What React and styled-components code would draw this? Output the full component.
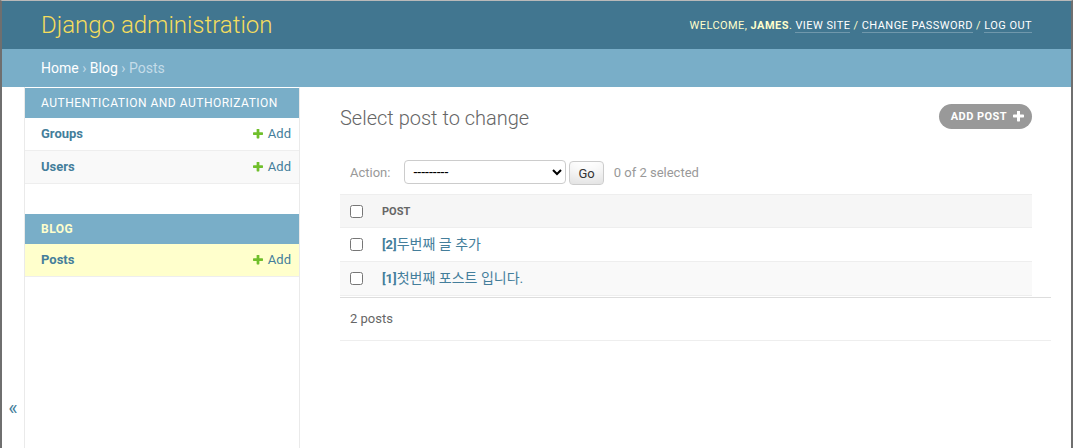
import React from 'react'
import styled, { createGlobalStyle } from 'styled-components'

const GlobalStyle = createGlobalStyle`
  html {
    box-sizing: border-box;
  }
  *, *::before, *::after {
    box-sizing: inherit;
  }
  body {
    margin: 0;
    font-family: Roboto, 'Noto Sans CJK KR', 'Liberation Sans', sans-serif;
    font-size: 14px;
    color: #333;
    background: #fff;
  }
`

const Frame = styled.div`
  min-height: 100vh;
  display: flex;
  flex-direction: column;
  border-top: 1px solid #b9b9b9;
  border-left: 2px solid #6f6f6f;
  border-right: 2px solid #6f6f6f;
`

const Header = styled.header`
  display: flex;
  justify-content: space-between;
  align-items: center;
  height: 48px;
  padding: 10px 39px 10px 39px;
  background: #417690;
  color: #ffc;
`

const Branding = styled.h1`
  margin: 0;
  font-size: 24px;
  font-weight: 300;
  line-height: 28px;
  color: #f5dd5d;
`

const UserTools = styled.div`
  font-size: 11px;
  letter-spacing: 0.45px;
  text-transform: uppercase;
  color: #ffc;
  padding-top: 1px;

  strong {
    font-weight: 700;
  }
`

const ToolLink = styled.a`
  color: #fff;
  text-decoration: none;
  border-bottom: 1px solid rgba(255, 255, 255, 0.25);
`

const Breadcrumbs = styled.nav`
  padding: 10px 39px;
  background: #79aec8;
  color: #c4dce8;
  font-size: 14px;
  line-height: 18px;

  a {
    color: #fff;
    text-decoration: none;
  }
`

const Main = styled.div`
  flex: 1;
  display: flex;
`

const Toggle = styled.button`
  flex: 0 0 23px;
  display: flex;
  align-items: flex-end;
  justify-content: center;
  padding: 0 0 28px;
  border: 0;
  border-right: 1px solid #eaeaea;
  background: #fff;
  color: #447e9b;
  font-family: Roboto, sans-serif;
  font-size: 20px;
  line-height: 23px;
`

const Sidebar = styled.nav`
  flex: 0 0 275px;
  border-top: 1px solid transparent;
  border-right: 1px solid #eaeaea;
`

const Module = styled.div`
  margin-bottom: 30px;
`

const Caption = styled.div`
  padding: 8px 16px;
  background: #79aec8;
  color: ${p => (p.current ? '#ffc' : '#fff')};
  font-size: 12px;
  font-weight: ${p => (p.current ? 700 : 400)};
  line-height: 14px;
  letter-spacing: 0.5px;
  text-transform: uppercase;
`

const NavRow = styled.div`
  display: flex;
  justify-content: space-between;
  padding: 8px 8px 8px 16px;
  font-size: 13px;
  line-height: 16px;
  border-bottom: 1px solid #eee;
  background: ${p => (p.current ? '#ffc' : p.alt ? '#f9f9f9' : '#fff')};
`

const ModelLink = styled.a`
  color: #447e9b;
  font-weight: 700;
  text-decoration: none;
`

const AddLink = styled.a`
  display: flex;
  align-items: center;
  gap: 5px;
  color: #447e9b;
  text-decoration: none;
`

const Content = styled.div`
  flex: 1;
  padding: 20px 39px 20px 40px;
`

const TitleRow = styled.div`
  display: flex;
  justify-content: space-between;
  align-items: flex-start;
`

const Title = styled.h1`
  margin: 0 0 20px;
  font-size: 20px;
  font-weight: 300;
  line-height: 23px;
  color: #666;
`

const AddButton = styled.a`
  display: flex;
  align-items: center;
  gap: 6px;
  margin-top: -3px;
  height: 25px;
  padding: 0 8px 0 12px;
  border-radius: 15px;
  background: #999;
  color: #fff;
  font-size: 11px;
  font-weight: 700;
  letter-spacing: 0.45px;
  text-transform: uppercase;
  text-decoration: none;
`

const Actions = styled.div`
  display: flex;
  align-items: center;
  padding: 10px;
  height: 44px;
  color: #999;
  font-size: 13px;
`

const ActionSelect = styled.select`
  width: 162px;
  height: 24px;
  margin: 0 0 0 14px;
  padding: 0 0 0 4px;
  border: 1px solid #ccc;
  border-radius: 4px;
  background: #fff;
  color: #000;
  font-family: Roboto, sans-serif;
  font-size: 14px;
`

const GoButton = styled.button`
  height: 24px;
  margin: 2px 0 0 3px;
  padding: 4px 8px;
  border: 1px solid #ccc;
  border-radius: 4px;
  background: #fff;
  box-shadow: 0 -15px 20px -10px rgba(0, 0, 0, 0.15) inset;
  color: #333;
  font-family: Roboto, sans-serif;
  font-size: 13px;
  line-height: 1;
`

const Counter = styled.span`
  margin-left: 10px;
`

const Results = styled.table`
  width: 100%;
  border-collapse: collapse;
  font-size: 13px;
`

const HeadCell = styled.th`
  padding: ${p => (p.check ? '0 0 0 10px' : '0 10px')};
  width: ${p => (p.check ? '32px' : 'auto')};
  height: 33px;
  background: #f6f6f6;
  border-top: 1px solid #eee;
  border-bottom: 1px solid #eee;
  text-align: left;
  vertical-align: middle;
  color: #666;
  font-size: 11px;
  font-weight: 700;
  text-transform: uppercase;
`

const Row = styled.tr`
  background: ${p => (p.alt ? '#f9f9f9' : '#fff')};
`

const Cell = styled.td`
  padding: ${p => (p.check ? '0 0 0 10px' : '8px 10px')};
  line-height: 16px;
  height: ${p => (p.tall ? '34px' : '33px')};
  border-bottom: 1px solid #eee;
  vertical-align: middle;
`

const Check = styled.input`
  display: block;
  margin: 0;
  width: 13px;
  height: 13px;
`

const PostLink = styled.a`
  color: #447e9b;
  font-size: 14px;
  text-decoration: none;

  b {
    font-size: 13px;
    font-weight: 700;
  }
`

const Paginator = styled.p`
  margin: 1px -19px 0 0;
  padding: 10px;
  line-height: 22px;
  font-size: 13px;
  color: #666;
  border-top: 1px solid #ddd;
  border-bottom: 1px solid #eee;
`

const Plus = ({ color, size = 10 }) => (
  <svg width={size} height={size} viewBox="192 192 1408 1408" aria-hidden="true">
    <path
      fill={color}
      d="M1600 736v192q0 40-28 68t-68 28h-416v416q0 40-28 68t-68 28h-192q-40 0-68-28t-28-68v-416h-416q-40 0-68-28t-28-68v-192q0-40 28-68t68-28h416v-416q0-40 28-68t68-28h192q40 0 68 28t28 68v416h416q40 0 68 28t28 68z"
    />
  </svg>
)

const apps = [
  {
    name: 'Authentication and Authorization',
    models: ['Groups', 'Users']
  },
  {
    name: 'Blog',
    current: true,
    models: ['Posts']
  }
]

const posts = [
  { id: 2, title: '두번째 글 추가' },
  { id: 1, title: '첫번째 포스트 입니다.' }
]

export default function App() {
  return (
    <>
      <GlobalStyle />
      <Frame>
        <Header>
          <Branding>Django administration</Branding>
          <UserTools>
            Welcome, <strong>james</strong>. <ToolLink href="#">View site</ToolLink> /{' '}
            <ToolLink href="#">Change password</ToolLink> / <ToolLink href="#">Log out</ToolLink>
          </UserTools>
        </Header>
        <Breadcrumbs>
          <a href="#">Home</a> › <a href="#">Blog</a> › Posts
        </Breadcrumbs>
        <Main>
          <Toggle aria-label="Toggle navigation">«</Toggle>
          <Sidebar>
            {apps.map(app => (
              <Module key={app.name}>
                <Caption current={app.current}>{app.name}</Caption>
                {app.models.map((model, i) => (
                  <NavRow key={model} alt={i % 2 === 1} current={app.current}>
                    <ModelLink href="#">{model}</ModelLink>
                    <AddLink href="#">
                      <Plus color="#70bf2b" />
                      Add
                    </AddLink>
                  </NavRow>
                ))}
              </Module>
            ))}
          </Sidebar>
          <Content>
            <TitleRow>
              <Title>Select post to change</Title>
              <AddButton href="#">
                Add post
                <Plus color="#fff" size={11} />
              </AddButton>
            </TitleRow>
            <Actions>
              <label>Action:</label>
              <ActionSelect defaultValue="">
                <option value="">---------</option>
                <option value="delete">Delete selected posts</option>
              </ActionSelect>
              <GoButton>Go</GoButton>
              <Counter>0 of 2 selected</Counter>
            </Actions>
            <Results>
              <thead>
                <tr>
                  <HeadCell check>
                    <Check type="checkbox" />
                  </HeadCell>
                  <HeadCell>Post</HeadCell>
                </tr>
              </thead>
              <tbody>
                {posts.map((post, i) => (
                  <Row key={post.id} alt={i % 2 === 1}>
                    <Cell check tall={i === 1}>
                      <Check type="checkbox" />
                    </Cell>
                    <Cell tall={i === 1}>
                      <PostLink href="#">
                        <b>[{post.id}]</b>
                        {post.title}
                      </PostLink>
                    </Cell>
                  </Row>
                ))}
              </tbody>
            </Results>
            <Paginator>2 posts</Paginator>
          </Content>
        </Main>
      </Frame>
    </>
  )
}
